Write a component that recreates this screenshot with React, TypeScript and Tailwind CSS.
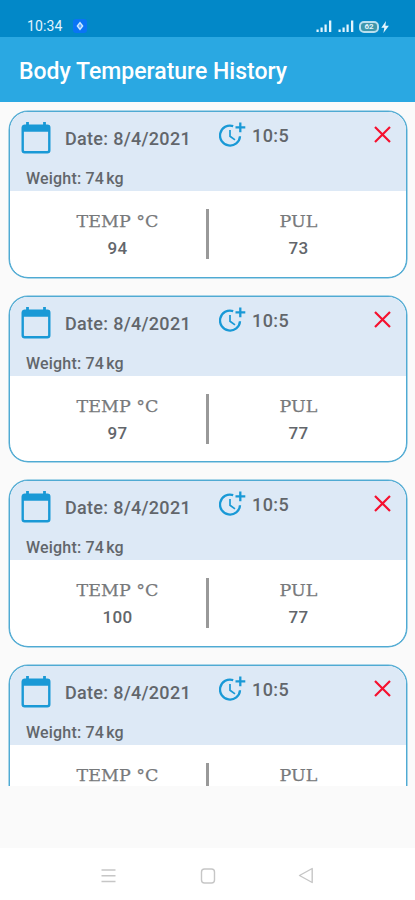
type Reading = {
  id: number;
  date: string;
  time: string;
  weight: number;
  temp?: number;
  pulse?: number;
};

const READINGS: Reading[] = [
  { id: 1, date: "8/4/2021", time: "10:5", weight: 74, temp: 94, pulse: 73 },
  { id: 2, date: "8/4/2021", time: "10:5", weight: 74, temp: 97, pulse: 77 },
  { id: 3, date: "8/4/2021", time: "10:5", weight: 74, temp: 100, pulse: 77 },
  { id: 4, date: "8/4/2021", time: "10:5", weight: 74 },
];

function SignalIcon() {
  return (
    <svg width="17" height="13" viewBox="0 0 17 13" fill="#e3f4fd">
      <rect x="0.5" y="9.5" width="2.2" height="2.5" />
      <rect x="4.5" y="7.5" width="2.2" height="4.5" />
      <rect x="8.5" y="4.5" width="2.2" height="7.5" />
      <rect x="13" y="0.5" width="2.3" height="11.5" />
    </svg>
  );
}

function StatusBar() {
  return (
    <div className="flex h-[37px] shrink-0 items-start bg-[#0288c8] pt-[18px] pl-[27px] text-[#e3f4fd]">
      <span className="w-[46px] text-[14px] leading-[16px] tracking-[0.1px]">10:34</span>
      <svg className="mt-px" width="14" height="14" viewBox="0 0 14 14">
        <rect width="14" height="14" rx="3" fill="#0a74f5" />
        <path d="M7 2.5 10.5 7 7 11.5 3.5 7Z" fill="#cfe8ff" />
        <path d="M7 5v4M5.5 7h3" stroke="#0a74f5" strokeWidth="0.7" />
      </svg>
      <div className="ml-[229px] flex items-center gap-[4.5px] pt-[2px]">
        <SignalIcon />
        <SignalIcon />
        <div className="flex items-center gap-[2px]">
          <span className="flex h-[12px] w-[20px] items-center justify-center rounded-[5px] border-2 border-[#b9dfee] bg-[#3f97ab] text-[8px] leading-none font-bold">
            62
          </span>
          <svg width="8" height="12" viewBox="0 0 8 12" fill="#e3f4fd">
            <path d="M5 0 0.3 6.8h3L2.4 12 7.9 4.7H4.4Z" />
          </svg>
        </div>
      </div>
    </div>
  );
}

function CalendarIcon() {
  return (
    <svg width="30" height="33" viewBox="0 0 30 33" fill="none">
      <path d="M6.5 1v5M23.5 1v5" stroke="#1999d6" strokeWidth="2.8" />
      <rect x="1.7" y="4.7" width="26.6" height="26.6" rx="2" stroke="#1999d6" strokeWidth="2.4" />
      <path d="M1.5 4.5h27v6.2h-27Z" fill="#1999d6" />
    </svg>
  );
}

function ClockPlusIcon() {
  return (
    <svg className="mt-px" width="27" height="26" viewBox="0 0 27 26" fill="none" stroke="#1999d6">
      <path d="M14.2 4.1A10 10 0 1 0 21 14.2" strokeWidth="2.3" />
      <path d="M11 8v6.3l5 3.6" strokeWidth="1.7" />
      <path d="M21.3 0.5v9.8M16.5 5.4h9.8" strokeWidth="2.3" />
    </svg>
  );
}

function Measure({ label, value }: { label: string; value?: number }) {
  return (
    <div className="flex w-[196px] shrink-0 flex-col items-center pt-[2px] first:pl-[19px] last:pr-[17px]">
      <span className="font-['DejaVu_Serif',serif] text-[17.5px] leading-[20px] whitespace-nowrap text-[#77797b] [-webkit-text-stroke:0.25px_#77797b]">
        {label}
      </span>
      {value !== undefined && (
        <span className="mt-[6px] text-[17px] leading-[22px] font-medium tracking-[0.4px]">{value}</span>
      )}
    </div>
  );
}

function ReadingCard({ reading }: { reading: Reading }) {
  return (
    <article className="h-[166.5px] shrink-0 overflow-hidden rounded-[19px] border border-[#4faad3] bg-white text-[#62666b] ring-[0.5px] ring-[#58afd5]">
      <div className="h-[79px] bg-[#dde9f6]">
        <div className="flex h-[53px] items-start pt-[9px] pl-[11px]">
          <CalendarIcon />
          <p className="ml-[14px] w-[154px] pt-[7px] text-[18px] leading-[22px] font-medium tracking-[0.3px] whitespace-nowrap">
            Date: {reading.date}
          </p>
          <ClockPlusIcon />
          <p className="ml-[6px] w-[122px] pt-[4px] text-[18px] leading-[22px] font-medium tracking-[0.4px]">
            {reading.time}
          </p>
          <button className="mt-[5px]" aria-label="Delete">
            <svg width="17" height="17" viewBox="0 0 17 17" stroke="#f5112f" strokeWidth="2.2">
              <path d="m1 1 15 15M16 1 1 16" />
            </svg>
          </button>
        </div>
        <p className="pt-[4px] pl-[16px] text-[16px] leading-[20px] font-medium tracking-[0.2px]">
          Weight: {reading.weight}
          <span className="ml-[2px]">kg</span>
        </p>
      </div>

      <div className="flex pt-[18px]">
        <Measure label="TEMP °C" value={reading.temp} />
        <div className="h-[50px] w-[3px] shrink-0 bg-[#999]" />
        <Measure label="PUL" value={reading.pulse} />
      </div>
    </article>
  );
}

function NavBar() {
  return (
    <nav className="flex h-[52px] shrink-0 items-center justify-between bg-white px-[100px] pt-[2px]">
      <svg width="17" height="17" viewBox="0 0 17 17" stroke="#c6c6c6" strokeWidth="1.4">
        <path d="M1.5 3h14M1.5 8.8h14M1.5 14.5h14" />
      </svg>
      <svg width="16" height="17" viewBox="0 0 16 17" fill="none" stroke="#c6c6c6" strokeWidth="1.4">
        <rect x="1.5" y="2" width="13" height="14" rx="3" />
      </svg>
      <svg width="17" height="17" viewBox="0 0 17 17" fill="none" stroke="#c6c6c6" strokeWidth="1.4" strokeLinejoin="round">
        <path d="M14.2 1.5v14L1.5 8.5Z" />
      </svg>
    </nav>
  );
}

export default function App() {
  return (
    <div className="flex h-[900px] w-[415px] flex-col overflow-hidden bg-[#fafafa] font-[Roboto,sans-serif]">
      <StatusBar />
      <header className="flex h-[65px] shrink-0 items-center bg-[#2aa8e2] pt-[4px] pl-[19px]">
        <h1 className="text-[23px] leading-[28px] font-medium text-white">Body Temperature History</h1>
      </header>
      <main className="flex h-[684px] shrink-0 flex-col gap-[18.2px] overflow-hidden pt-[9px] pr-[8.5px] pl-[9px]">
        {READINGS.map((reading) => (
          <ReadingCard key={reading.id} reading={reading} />
        ))}
      </main>
      <div className="grow" />
      <NavBar />
    </div>
  );
}
